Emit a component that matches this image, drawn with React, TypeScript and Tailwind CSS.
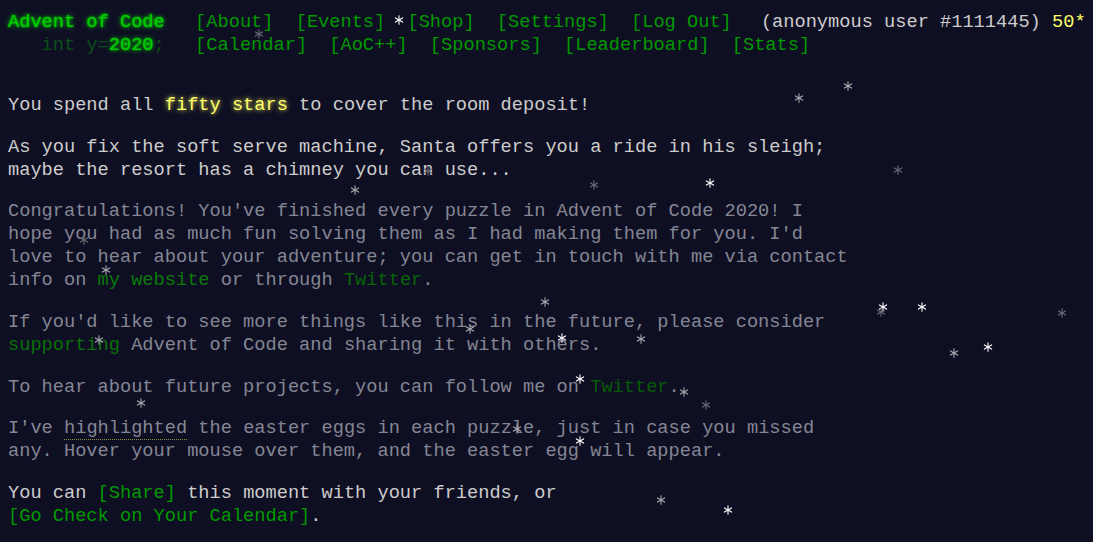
import React from 'react';

type Flake = [number, number, 'b' | 'm' | 'd'];

const flakes: Flake[] = [
  [399, 20, 'b'], [259, 34, 'd'], [848, 86, 'm'], [799, 98, 'm'], [428, 171, 'd'],
  [355, 190, 'm'], [594, 185, 'd'], [710, 183, 'b'], [898, 170, 'd'], [84, 240, 'd'],
  [106, 270, 'm'], [545, 302, 'm'], [883, 307, 'b'], [881, 312, 'd'], [922, 307, 'b'],
  [1062, 313, 'd'], [470, 329, 'm'], [562, 338, 'b'], [641, 339, 'm'], [99, 340, 'm'],
  [954, 353, 'm'], [988, 347, 'b'], [580, 379, 'b'], [684, 392, 'm'], [706, 405, 'd'],
  [141, 403, 'm'], [517, 429, 'm'], [580, 441, 'b'], [661, 500, 'm'], [728, 510, 'b'],
];

const flakeColor = { b: '#ffffff', m: '#a9a9b0', d: '#6b6b75' };

const Snowflake: React.FC<{ x: number; y: number; tone: 'b' | 'm' | 'd' }> = ({ x, y, tone }) => (
  <svg
    className="pointer-events-none absolute"
    style={{ left: x - 5, top: y - 5 }}
    width="10"
    height="10"
    viewBox="0 0 10 10"
    stroke={flakeColor[tone]}
    strokeWidth="1.1"
    strokeLinecap="round"
  >
    <line x1="5" y1="0.8" x2="5" y2="9.2" />
    <line x1="1.4" y1="2.9" x2="8.6" y2="7.1" />
    <line x1="1.4" y1="7.1" x2="8.6" y2="2.9" />
  </svg>
);

const navTop = ['About', 'Events', 'Shop', 'Settings', 'Log Out'];
const navBottom = ['Calendar', 'AoC++', 'Sponsors', 'Leaderboard', 'Stats'];

const glow = '[text-shadow:0_0_2px_#00cc00,0_0_5px_#00cc00]';

export default function App() {
  return (
    <div className="relative h-[542px] overflow-hidden bg-[#0f0f23] font-['Liberation_Mono',monospace] text-[18.67px] leading-[23px] text-[#cccccc]">
      <header className="whitespace-pre pl-2 pt-[11px]">
        <div className="flex">
          <h1 className={`w-[176px] text-[#00cc00] ${glow}`}>Advent of Code</h1>
          <nav className="flex">
            {navTop.map((l) => (
              <a key={l} className="px-[11.1px] text-[#009900]">[{l}]</a>
            ))}
          </nav>
          <div className="pl-[18px]">
            (anonymous user #1111445) <span className="text-[#ffff66]">50*</span>
          </div>
        </div>
        <div className="flex">
          <h1 className="w-[176px]">
            {'   '}
            <span className="text-[#00cc00] opacity-[0.33]">int y=</span>
            <span className={`text-[#00cc00] ${glow}`}>2020</span>
            <span className="text-[#00cc00] opacity-[0.33]">;</span>
          </h1>
          <nav className="flex">
            {navBottom.map((l) => (
              <a key={l} className="px-[11.1px] text-[#009900]">[{l}]</a>
            ))}
          </nav>
        </div>
      </header>

      <main className="whitespace-pre pl-2 pt-[37px]">
        <p className="mb-[18.67px]">
          You spend all{' '}
          <span className="text-[#ffff66] [text-shadow:0_0_5px_#ffff66]">fifty stars</span> to cover the room deposit!
        </p>
        <p className="mb-[18.67px]">
          As you fix the soft serve machine, Santa offers you a ride in his sleigh;
          <br />
          maybe the resort has a chimney you can use...
        </p>
        <p className="mb-[18.67px] text-[#848694]">
          Congratulations! You've finished every puzzle in Advent of Code 2020! I
          <br />
          hope you had as much fun solving them as I had making them for you. I'd
          <br />
          love to hear about your adventure; you can get in touch with me via contact
          <br />
          info on <a className="text-[#0a7a0a]">my website</a> or through{' '}
          <a className="text-[#076407]">Twitter</a>.
        </p>
        <p className="mb-[18.67px] text-[#848694]">
          If you'd like to see more things like this in the future, please consider
          <br />
          <a className="text-[#0a700a]">supporting</a> Advent of Code and sharing it with others.
        </p>
        <p className="mb-[18.67px] text-[#848694]">
          To hear about future projects, you can follow me on{' '}
          <a className="text-[#065c06]">Twitter</a>.
        </p>
        <p className="mb-[18.67px] text-[#848694]">
          I've{' '}
          <span className="border-b border-dotted border-[#8f8f45]">highlighted</span> the easter eggs in each puzzle, just in case you missed
          <br />
          any. Hover your mouse over them, and the easter egg will appear.
        </p>
        <p className="mb-[18.67px]">
          You can <a className="text-[#009900]">[Share]</a> this moment with your friends, or
          <br />
          <a className="text-[#009900]">[Go Check on Your Calendar]</a>.
        </p>
      </main>

      {flakes.map(([x, y, t], i) => (
        <Snowflake key={i} x={x} y={y} tone={t} />
      ))}
    </div>
  );
}
